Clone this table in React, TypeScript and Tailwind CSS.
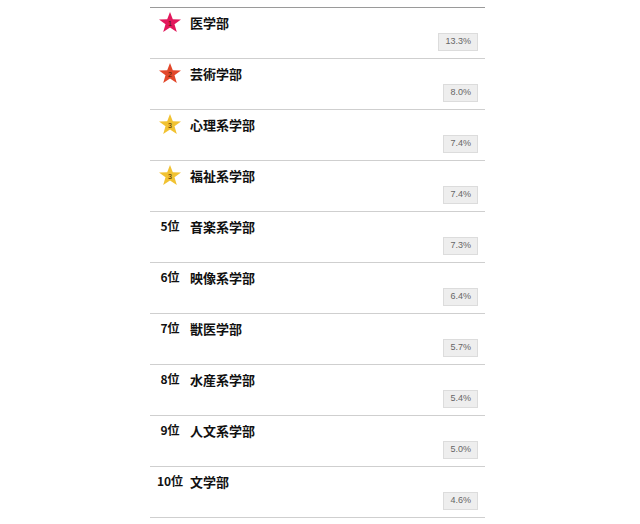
import React from 'react';

type Item = { rank: number; name: string; pct: string };

const items: Item[] = [
  { rank: 1, name: '医学部', pct: '13.3%' },
  { rank: 2, name: '芸術学部', pct: '8.0%' },
  { rank: 3, name: '心理系学部', pct: '7.4%' },
  { rank: 3, name: '福祉系学部', pct: '7.4%' },
  { rank: 5, name: '音楽系学部', pct: '7.3%' },
  { rank: 6, name: '映像系学部', pct: '6.4%' },
  { rank: 7, name: '獣医学部', pct: '5.7%' },
  { rank: 8, name: '水産系学部', pct: '5.4%' },
  { rank: 9, name: '人文系学部', pct: '5.0%' },
  { rank: 10, name: '文学部', pct: '4.6%' },
];

const starColors: Record<number, string> = {
  1: '#e2185c',
  2: '#e2472a',
  3: '#f1c232',
};

const Star: React.FC<{ rank: number }> = ({ rank }) => (
  <svg width="24" height="22" viewBox="0 0 24 22" className="block">
    <polygon
      points="12,1 14.8,8.2 23,8.4 16.5,13.2 18.8,21 12,16.4 5.2,21 7.5,13.2 1,8.4 9.2,8.2"
      fill={starColors[rank]}
    />
    <text
      x="12"
      y="15"
      textAnchor="middle"
      fontSize="7"
      fill="#4a1f00"
      fontFamily="'Liberation Sans', sans-serif"
    >
      {rank}
    </text>
  </svg>
);

export default function App() {
  return (
    <div className="w-[640px] h-[524px] bg-white pt-[7px] font-['Noto_Sans_CJK_JP','Noto_Sans',sans-serif]">
      <div className="ml-[150px] w-[335px] border-t border-[#9a9a9a]">
        {items.map((it, i) => (
          <div key={i} className="h-[51px] border-b border-[#cfcfcf] pt-[5px] pr-[7px]">
            <div className="flex items-center h-[18px]">
              <div className="w-[36px] mr-[4px] flex justify-center pl-[4px]">
                {it.rank <= 3 ? (
                  <Star rank={it.rank} />
                ) : (
                  <span className="text-[12px] font-bold text-[#111] leading-none">{it.rank}位</span>
                )}
              </div>
              <span className="text-[13px] font-bold text-[#111] leading-none">{it.name}</span>
            </div>
            <div className="flex justify-end mt-[2px]">
              <span className="h-[18px] px-[6px] flex items-center bg-[#eeeeee] border border-[#dcdcdc] text-[9px] text-[#666] font-['Liberation_Sans',sans-serif]">
                {it.pct}
              </span>
            </div>
          </div>
        ))}
      </div>
    </div>
  );
}
